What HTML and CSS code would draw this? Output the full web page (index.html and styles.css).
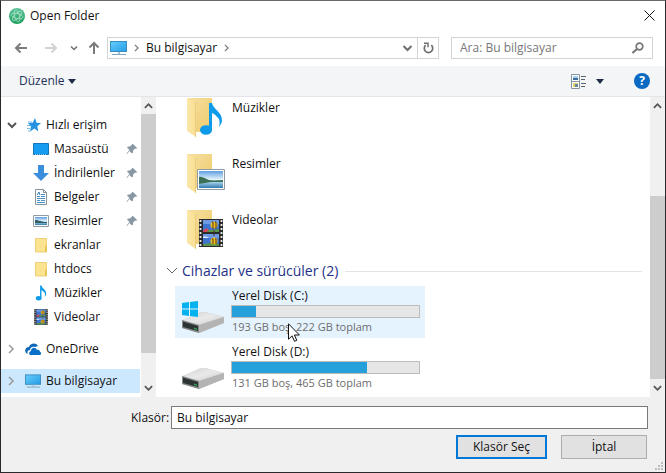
FILE: index.html
```html
<!DOCTYPE html>
<html lang="tr">
<head>
<meta charset="utf-8">
<title>Open Folder</title>
<link rel="stylesheet" href="styles.css">
</head>
<body>
<svg class="defs" aria-hidden="true">
  <defs>
    <linearGradient id="screen" x1="0" y1="0" x2="1" y2="1"><stop offset="0" stop-color="#68cdfb"/><stop offset="1" stop-color="#249de8"/></linearGradient>
    <linearGradient id="fold" x1="0" y1="0" x2="1" y2="1"><stop offset="0" stop-color="#f7e0a0"/><stop offset="1" stop-color="#edca6c"/></linearGradient>
    <linearGradient id="flap" x1="0" y1="0" x2="1" y2="0"><stop offset="0" stop-color="#fbe7a8"/><stop offset="1" stop-color="#fadf92"/></linearGradient>
    <linearGradient id="metal" x1="0" y1="0" x2="1" y2="1"><stop offset="0" stop-color="#d2d2d2"/><stop offset=".5" stop-color="#e9e9e9"/><stop offset="1" stop-color="#c9c9c9"/></linearGradient>
    <linearGradient id="atom" x1="0" y1="0" x2="0" y2="1"><stop offset="0" stop-color="#5fc39b"/><stop offset="1" stop-color="#1d9f5e"/></linearGradient>
    <linearGradient id="sky" x1="0" y1="0" x2="0" y2="1"><stop offset="0" stop-color="#5f9fe0"/><stop offset=".5" stop-color="#e3f2fb"/><stop offset=".7" stop-color="#95c5e3"/><stop offset="1" stop-color="#317aac"/></linearGradient>
    <symbol id="monitor" viewBox="0 0 17 16"><rect x=".5" y="1.5" width="16" height="10" fill="url(#screen)" stroke="#3b8dbf"/><path d="M8 12h2v2H8z" fill="#a6c6d8"/><path d="M2 14.5h14" stroke="#7da6bd"/></symbol>
    <symbol id="folder" viewBox="0 0 16 16"><path d="M2 1h12v14H2z" fill="#fce38f"/><path d="M2.500 15V1.500h11V15z" fill="none" stroke="#efd17d"/><path d="M12 15V9l2-1v7z" fill="#e9c45a"/></symbol>
    <symbol id="note" viewBox="0 0 22 34"><ellipse cx="6" cy="28" rx="6" ry="4.800" fill="#0f9bec"/><path d="M9 1h3c1 6 10 9 10 17 0 2-1 5-3 7 1-4 1-8-2-10-1-2-3-3-5-4v17H9z" fill="#0f9bec"/></symbol>
    <symbol id="film" viewBox="0 0 24 28"><path d="M0 0h24v28H0z" fill="#2b2b2b"/><path d="M4 1h16v12H4zM4 15h16v12H4z" fill="#3f74d0"/><path d="M4 1h16v4H4zM4 15h16v4H4z" fill="#6c9ae4"/><path d="M4 12c2-3 4-3 6-1l1 2H4z" fill="#d3475c"/><path d="M9 11l5 0 6-1v3H8zM4 25l8-1 8 1v2H4z" fill="#5b9448"/><path d="M4 18c2-1 5 0 6 1H4z" fill="#dfe9f8"/><circle cx="15" cy="6" r="3.500" fill="#eebd22"/><circle cx="15" cy="22" r="3.500" fill="#eebd22"/><path d="M13 3h1v7M16 3h1v7M15 11v2M13 20h1v5M16 20h1v5M15 15v2" fill="none" stroke="#51391b"/><path d="M1.500 1v26M22.500 1v26" stroke="#e9ecec" stroke-width="1.800" stroke-dasharray="2 2"/></symbol>
    <symbol id="photo" viewBox="0 0 28 21"><path d="M.5.5h27v20H.5z" fill="#fff" stroke="#929ba1"/><path d="M2 2h24v17H2z" fill="url(#sky)"/><path d="M2 8c4-1 6 2 10 3 5 1 9 0 14 0v2H14L2 15z" fill="#3c7155"/></symbol>
    <symbol id="pin" viewBox="0 0 12 12"><path d="M7 1l4 4-1 1-1-.5-2 2 0 2-1 1-2.500-2.500L1 11l-.5-.5L3.500 7 1 4.500l1-1 2 0 2-2L6 1z" fill="#8797a4"/></symbol>
    <symbol id="right" viewBox="0 0 8 10"><path d="M2 1l4 4-4 4" fill="none" stroke="currentColor" stroke-width="1.500"/></symbol>
    <symbol id="down" viewBox="0 0 10 8"><path d="M1 2l4 4 4-4" fill="none" stroke="currentColor" stroke-width="2"/></symbol>
    <symbol id="bigfolder" viewBox="0 0 26 42"><path d="M1 1h24v34H9z" fill="url(#fold)"/><path d="M0 1l9 4v35l-9-6z" fill="url(#flap)"/><path d="M8.500 5v35" stroke="#ebcd7e"/></symbol>
    <symbol id="drive" viewBox="0 0 42 22"><path d="M0 10L19 1h4l19 5v6L17 22 0 17z" fill="#bdbdbd"/><path d="M0 9L19 1h4l19 5-25 8z" fill="url(#metal)"/><path d="M0 9l17 5v8L0 17z" fill="#858a89"/><path d="M1 10.500l15 4.500v5L1 16z" fill="#2d3333"/><path d="M12 16.500l3 1v1.500l-3-1z" fill="#30a65a"/><path d="M17 14l25-8v6l-25 10z" fill="#b4b4b4"/></symbol>
  </defs>
</svg>
<div class="window">
  <header class="titlebar">
    <svg class="i16" viewBox="0 0 16 16"><circle cx="8" cy="8" r="8" fill="url(#atom)"/><g fill="none" stroke="#b5e6cf" stroke-width=".7"><ellipse cx="8" cy="8" rx="6" ry="2.500" transform="rotate(15 8 8)"/><ellipse cx="8" cy="8" rx="6" ry="2.500" transform="rotate(75 8 8)"/><ellipse cx="8" cy="8" rx="6" ry="2.500" transform="rotate(135 8 8)"/></g></svg>
    <h1>Open Folder</h1>
    <button class="close" aria-label="Close"><svg viewBox="0 0 11 11"><path d="M.5.5l10 10M10.500.5l-10 10" stroke="#111"/></svg></button>
  </header>
  <nav class="navbar">
    <button class="nav" aria-label="Back"><svg viewBox="0 0 14 12"><path d="M13 6H2M6.500 1.500L2 6l4.500 4.500" fill="none" stroke="#7b7b7b" stroke-width="2"/></svg></button>
    <button class="nav fwd" aria-label="Forward"><svg viewBox="0 0 14 12"><path d="M1 6h11M7.500 1.500L12 6l-4.500 4.500" fill="none" stroke="#d2d2d2" stroke-width="2"/></svg></button>
    <button class="recent" aria-label="Recent"><svg><use href="#down"/></svg></button>
    <button class="up" aria-label="Up"><svg viewBox="0 0 12 14"><path d="M6 13V2M1.500 6.500L6 2l4.500 4.500" fill="none" stroke="#7b7b7b" stroke-width="2"/></svg></button>
    <div class="address">
      <svg class="pc"><use href="#monitor"/></svg>
      <svg class="chev"><use href="#right"/></svg>
      <a href="#">Bu bilgisayar</a>
      <svg class="chev"><use href="#right"/></svg>
      <button class="history" aria-label="History"><svg><use href="#down"/></svg></button>
      <button class="refresh" aria-label="Refresh"><svg viewBox="0 0 11 12"><path d="M8.300 3.200a4.200 4.200 0 1 1-5.600 0" fill="none" stroke="#6f6f6f" stroke-width="1.700"/><path d="M1 1.200h4v4" fill="none" stroke="#6f6f6f" stroke-width="1.500"/></svg></button>
    </div>
    <label class="search"><input type="search" placeholder="Ara: Bu bilgisayar" aria-label="Ara"><svg viewBox="0 0 12 12"><circle cx="7.500" cy="4.500" r="3.300" fill="none" stroke="#777" stroke-width="1.700"/><path d="M5 7l-4.500 4" stroke="#777" stroke-width="2"/></svg></label>
  </nav>
  <div class="toolbar">
    <button class="organize">Düzenle <i class="caret"></i></button>
    <button class="view" aria-label="View"><svg viewBox="0 0 15 15"><path d="M.5.5h8v14h-8zM.5 7.500h8" fill="#fff" stroke="#8795a2"/><path d="M2 2h5v4H2z" fill="#a9d1ed"/><path d="M2 4h5v2H2z" fill="#3b6e9e"/><path d="M2 9h5v4H2z" fill="#ddd36d"/><path d="M4 10h3v3H4z" fill="#6685a0"/><path d="M10 2.500h5M10 5.500h4M10 9.500h5M10 12.500h4" stroke="#59636e"/></svg><i class="caret"></i></button>
    <button class="help" aria-label="Help">?</button>
  </div>
  <div class="content">
    <aside class="sidebar">
      <ul class="tree">
        <li class="root first"><svg class="chev open"><use href="#down"/></svg><svg class="ico" viewBox="0 0 16 16"><path d="M10 1l1.500 4.800 4.500.2-3.700 3.200 1 5.300L9.500 11.500 5 14.500l1-5L3 6l4.700-.2z" fill="#2593df"/><path d="M2 8.500h3M2 11.500h3M3 14h2M3 5h4" stroke="#72bdea"/></svg><span>Hızlı erişim</span></li>
        <li><svg class="ico" viewBox="0 0 16 16"><path d="M.5 2.500h15v11H.5z" fill="#169df2" stroke="#1176bd"/><path d="M2 13.500h12" stroke="#8bcff7" stroke-dasharray="1 1"/></svg><span>Masaüstü</span><svg class="pin"><use href="#pin"/></svg></li>
        <li><svg class="ico" viewBox="0 0 16 16"><path d="M5 0h6v8h5l-8 8-8-8h5z" fill="#3b8edb"/></svg><span>İndirilenler</span><svg class="pin"><use href="#pin"/></svg></li>
        <li><svg class="ico" viewBox="0 0 16 16"><path d="M2.500.5h8l3 3v12h-11z" fill="#fff" stroke="#85929b"/><path d="M10.500.5v3h3" fill="none" stroke="#85929b"/><path d="M4 7.500h3M8 5.500h4M8 7.500h4M4 9.500h8M4 11.500h3M8 11.500h4M4 13.500h8" stroke="#478fc5"/><path d="M4 6l2-3 1 3" fill="none" stroke="#337eb6"/></svg><span>Belgeler</span><svg class="pin"><use href="#pin"/></svg></li>
        <li><svg class="ico" viewBox="0 0 16 16"><path d="M.5 2.500h15v11H.5z" fill="#fff" stroke="#929ba1"/><path d="M2 4h12v8H2z" fill="url(#sky)"/><path d="M2 7c4 0 6 2 12 2v1H2z" fill="#315f64"/></svg><span>Resimler</span><svg class="pin"><use href="#pin"/></svg></li>
        <li><svg class="ico"><use href="#folder"/></svg><span>ekranlar</span></li>
        <li><svg class="ico"><use href="#folder"/></svg><span>htdocs</span></li>
        <li><svg class="ico"><use href="#note"/></svg><span>Müzikler</span></li>
        <li><svg class="ico"><use href="#film"/></svg><span>Videolar</span></li>
        <li class="root"><svg class="chev"><use href="#right"/></svg><svg class="ico" viewBox="0 0 16 16"><path d="M1 12c-2-3 0-6 3-6 1-4 7-5 9-1l-3 1c-3-1-5 1-5 3-3 0-3 3-2 4z" fill="#0b67b7"/><path d="M5 14c-2-2 0-4 1-4 0-4 5-4 6-1 2-1 3 1 3 2 2 0 1 3 0 3z" fill="#0a70c8"/></svg><span>OneDrive</span></li>
        <li class="root selected"><svg class="chev"><use href="#right"/></svg><svg class="ico"><use href="#monitor"/></svg><span>Bu bilgisayar</span></li>
      </ul>
      <div class="scroll"><svg><use href="#down"/></svg><i></i><svg><use href="#down"/></svg></div>
    </aside>
    <main class="files">
      <div class="list">
        <div class="item"><div class="thumb"><svg class="bf"><use href="#bigfolder"/></svg><svg class="over note"><use href="#note"/></svg></div><span>Müzikler</span></div>
        <div class="item"><div class="thumb"><svg class="bf"><use href="#bigfolder"/></svg><svg class="over photo"><use href="#photo"/></svg></div><span>Resimler</span></div>
        <div class="item"><div class="thumb"><svg class="bf"><use href="#bigfolder"/></svg><svg class="over film"><use href="#film"/></svg></div><span>Videolar</span></div>
        <h2><svg viewBox="0 0 12 8"><path d="M1 1l5 5 5-5" fill="none" stroke="#666"/></svg>Cihazlar ve sürücüler (2)</h2>
        <div class="disk hover">
          <div class="thumb"><svg class="dr"><use href="#drive"/></svg><svg class="win" viewBox="0 0 16 16"><path d="M0 2l7-1v6.500H0zM8 1l8-1v7.500H8zM0 8.500h7V15l-7-1zM8 8.500h8V16l-8-1z" fill="#04b2ee"/></svg></div>
          <div class="info"><span>Yerel Disk (C:)</span><div class="bar"><i style="width:13%"></i></div><small>193 GB boş, 222 GB toplam</small></div>
          <svg class="cursor" viewBox="0 0 12 19"><path d="M.5.8v15.500l3.500-3.500 2.500 5.500 2.300-1-2.400-5.300h5z" fill="#fff" stroke="#111"/></svg>
        </div>
        <div class="disk">
          <div class="thumb"><svg class="dr"><use href="#drive"/></svg></div>
          <div class="info"><span>Yerel Disk (D:)</span><div class="bar"><i style="width:72%"></i></div><small>131 GB boş, 465 GB toplam</small></div>
        </div>
      </div>
      <div class="scroll long"><svg><use href="#down"/></svg><i></i><svg><use href="#down"/></svg></div>
    </main>
  </div>
  <footer class="footer">
    <div class="field"><label for="folder-name">Klasör:</label><input id="folder-name" type="text" value="Bu bilgisayar"></div>
    <div class="actions"><button class="primary">Klasör Seç</button><button class="cancel">İptal</button></div>
    <svg class="grip" viewBox="0 0 8 8"><path d="M6 0h2v2H6zM3 3h2v2H3zM6 3h2v2H6zM0 6h2v2H0zM3 6h2v2H3zM6 6h2v2H6z" fill="#bdbdbd"/></svg>
  </footer>
</div>
</body>
</html>
```

FILE: styles.css
```css
* { box-sizing: border-box; }
body { margin: 0; font: 12px/16px "Open Sans", "Noto Sans", sans-serif; color: #111; }
svg { display: block; flex: none; }
button { border: 0; padding: 0; margin: 0; background: none; font: inherit; color: inherit; display: flex; align-items: center; }
input { font: inherit; color: inherit; }
h1, h2 { margin: 0; font: inherit; }
.defs { position: absolute; width: 0; height: 0; }
.window { min-height: 100vh; display: flex; flex-direction: column; background: #fff; border: 1px solid #29282b; border-top-color: #69686a; }

.titlebar { display: flex; align-items: center; height: 29px; padding: 0 10px 0 8px; }
.i16 { width: 16px; height: 16px; }
.titlebar h1 { margin-left: 5px; }
.close { margin-left: auto; }
.close svg { width: 11px; height: 11px; }

.navbar { display: flex; align-items: center; height: 36px; padding: 0 12px 0 13px; color: #6f6f6f; }
.nav svg { width: 14px; height: 12px; }
.fwd { margin-left: 16px; }
.recent { margin-left: 12px; }
.recent svg { width: 8px; height: 6px; }
.up { margin-left: 10px; }
.up svg { width: 12px; height: 14px; }
.address { flex: 1; display: flex; align-items: center; height: 22px; margin-left: 7px; padding-left: 2px; border: 1px solid #d4d4d4; }
.pc { width: 17px; height: 16px; }
.chev { width: 8px; height: 10px; color: #777; }
.address .chev { margin: 0 6px; width: 7px; height: 8px; }
.address a { color: #111; text-decoration: none; }
.history { margin-left: auto; padding: 0 4px; }
.history svg { width: 11px; height: 8px; }
.refresh { height: 20px; border-left: 1px solid #d4d4d4; padding: 0 4px 0 5px; }
.refresh svg { width: 11px; height: 12px; }
.search { flex: none; display: flex; align-items: center; width: 202px; height: 22px; margin-left: 12px; padding: 0 8px; border: 1px solid #d4d4d4; }
.search input { flex: 1; min-width: 0; border: 0; padding: 0; outline: 0; }
.search input::placeholder { color: #777; opacity: 1; }
.search svg { width: 12px; height: 12px; }

.toolbar { display: flex; align-items: center; height: 31px; padding: 0 15px 0 18px; background: #f4f5f7; border-bottom: 1px solid #e3e5ea; color: #1e3259; }
.caret { border: 4px solid transparent; border-top: 5px solid #1e2c45; border-bottom: 0; margin-left: 3px; }
.view { margin-left: auto; }
.view svg { width: 15px; height: 15px; }
.view .caret { margin-left: 10px; }
.help { justify-content: center; width: 16px; height: 16px; margin-left: 30px; border-radius: 50%; background: #0969c3; color: #fff; font-weight: 700; }

.content { flex: 1; display: flex; }
.sidebar { flex: none; width: 155px; display: flex; }
.tree { flex: 1; list-style: none; margin: 0; padding: 16px 1px 0 0; }
.tree li { display: flex; align-items: center; height: 24px; padding-left: 32px; }
.tree .ico { width: 16px; height: 16px; margin-right: 5px; }
.tree .pin { width: 12px; height: 12px; margin: 0 2px 0 auto; }
.tree .root { padding-left: 6px; margin-top: 8px; }
.tree .first { margin-top: 0; }
.tree .root .chev { margin-right: 10px; color: #999; }
.tree .root .chev.open { width: 10px; height: 8px; margin-right: 8px; color: #555; }
.tree .selected { background: #cce8ff; }
.scroll { flex: none; width: 15px; display: flex; flex-direction: column; align-items: center; background: #f0f0f0; color: #555; padding-bottom: 5px; }
.scroll svg { width: 9px; height: 8px; margin-top: 5px; }
.scroll svg:first-child { transform: scaleY(-1); }
.scroll i { width: 15px; height: 239px; margin: 4px 0 auto; background: #cdcdcd; }
.scroll.long i { height: 183px; margin: auto 0 0; }
.files { flex: 1; display: flex; min-width: 0; }
.list { flex: 1; padding-left: 19px; min-width: 0; }
.item { display: flex; height: 56px; }
.item .thumb { position: relative; width: 57px; padding-left: 12px; }
.item span { margin-top: 3px; }
.bf { width: 26px; height: 42px; }
.over { position: absolute; }
.over.note { left: 25px; top: 5px; width: 22px; height: 34px; }
.over.photo { left: 22px; top: 16px; width: 28px; height: 21px; }
.over.film { left: 24px; top: 10px; width: 24px; height: 28px; }
h2 { display: flex; align-items: center; height: 20px; margin: -4px 8px 5px -9px; font-size: 14px; color: #1e3287; }
h2 svg { width: 12px; height: 8px; margin-right: 4px; }
h2::after { content: ""; flex: 1; height: 1px; margin-left: 7px; background: #dfe5e9; }
.disk { position: relative; display: flex; width: 250px; height: 52px; }
.disk + .disk { margin-top: 4px; }
.hover { background: #e5f3ff; }
.disk .thumb { position: relative; width: 56px; padding: 25px 0 0 7px; }
.dr { width: 42px; height: 22px; }
.win { position: absolute; left: 7px; top: 15px; width: 16px; height: 16px; }
.info { width: 189px; padding-top: 2px; }
.info span, .info small { display: block; padding-left: 1px; white-space: nowrap; }
.bar { height: 13px; margin: 1px 0; border: 1px solid #bcbcbc; background: #e6e6e6; }
.bar i { display: block; height: 100%; background: #26a0da; }
.info small { font-size: 11px; color: #6d6d6d; }
.cursor { position: absolute; left: 113px; top: 37px; width: 12px; height: 19px; }

.footer { position: relative; height: 75px; padding: 9px 17px 0 130px; background: #f0f0f0; }
.field { display: flex; align-items: center; gap: 2px; }
.field input { flex: 1; min-width: 0; height: 23px; padding: 0 5px; border: 1px solid #7a7a7a; background: #fff; }
.actions { display: flex; justify-content: flex-end; gap: 14px; margin: 6px 1px 0 0; }
.actions button { justify-content: center; height: 24px; background: #e1e1e1; }
.actions .primary { width: 91px; border: 2px solid #0078d7; }
.actions .cancel { width: 86px; border: 1px solid #adadad; }
.grip { position: absolute; right: 2px; bottom: 2px; width: 8px; height: 8px; }
```
